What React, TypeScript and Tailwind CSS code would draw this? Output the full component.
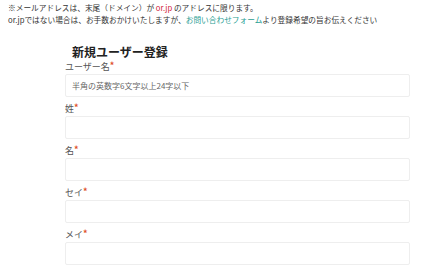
import React from 'react';

const font = { fontFamily: '"Noto Sans CJK JP", "Noto Sans", sans-serif' };

const Field: React.FC<{ label: string; placeholder?: string }> = ({ label, placeholder }) => (
  <div className="mb-[6px]">
    <div className="flex h-[12px] items-start text-[9px] leading-[12px] text-[#555]">
      <span>{label}</span>
      <span className="text-[9px] font-bold leading-[10px] text-[#e0502a]">*</span>
    </div>
    <input
      className="mt-[1px] block h-[23px] w-full rounded-[2px] border border-[#eeeeee] bg-white px-[6px] text-[8px] text-[#333] outline-none placeholder:text-[#666]"
      placeholder={placeholder}
      style={font}
    />
  </div>
);

const App: React.FC = () => {
  return (
    <div className="h-[272px] w-[448px] overflow-hidden bg-white" style={font}>
      <div className="px-[8px] pt-[2px] text-[7.7px] leading-[12px] text-[#333]">
        <p>
          ※メールアドレスは、末尾（ドメイン）が <span className="text-[#d0213a]">or.jp</span> のアドレスに限ります。
        </p>
        <p>
          or.jpではない場合は、お手数おかけいたしますが、
          <span className="text-[#1f9e93]">お問い合わせフォーム</span>
          より登録希望の旨お伝えください
        </p>
      </div>

      <div className="ml-[65px] w-[345px] pt-[19px]">
        <h1 className="mb-[2px] ml-[7px] text-[12px] font-bold leading-[14px] text-[#222]">新規ユーザー登録</h1>
        <div>
          <Field label="ユーザー名" placeholder="半角の英数字6文字以上24字以下" />
          <Field label="姓" />
          <Field label="名" />
          <Field label="セイ" />
          <Field label="メイ" />
        </div>
      </div>
    </div>
  );
};

export default App;
